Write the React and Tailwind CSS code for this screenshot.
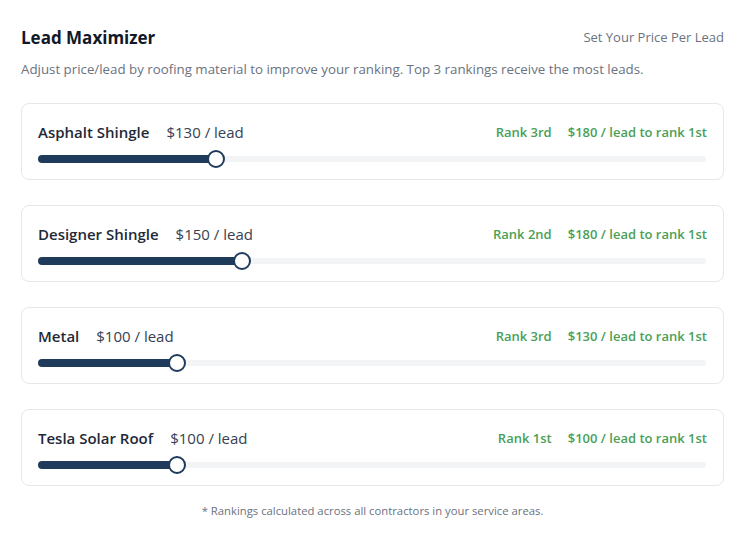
const ROWS = [
  { name: 'Asphalt Shingle', price: 130, rank: '3rd', target: 180 },
  { name: 'Designer Shingle', price: 150, rank: '2nd', target: 180 },
  { name: 'Metal', price: 100, rank: '3rd', target: 130 },
  { name: 'Tesla Solar Roof', price: 100, rank: '1st', target: 100 },
]

const MAX = 500

function Slider({ value }) {
  const frac = value / MAX
  const left = `calc(9px + ${frac} * (100% - 18px))`
  return (
    <div className="relative h-[18px] mt-[7px] mr-[1px]">
      <div className="absolute left-0 right-0 top-[6px] h-[6px] rounded-full bg-[#f3f4f6]" />
      <div className="absolute left-0 top-[5px] h-[8px] rounded-full bg-[#1f3b5c]" style={{ width: left }} />
      <div
        className="absolute top-0 w-[18px] h-[18px] -ml-[9px] rounded-full bg-white border-2 border-[#1f3b5c]"
        style={{ left }}
      />
    </div>
  )
}

export default function App() {
  return (
    <div className="w-[745px] h-[543px] bg-white px-[21px] pt-[26px] text-[#1f2937]" style={{ fontFamily: '"Open Sans", "Noto Sans", sans-serif' }}>
      <div className="flex items-center justify-between">
        <h1 className="text-[17px] font-bold text-[#111827] leading-[24px]">Lead Maximizer</h1>
        <span className="text-[13px] text-[#6b7280]">Set Your Price Per Lead</span>
      </div>
      <p className="mt-[10px] text-[13.3px] text-[#6b7280] leading-[18px]">
        Adjust price/lead by roofing material to improve your ranking. Top 3 rankings receive the most leads.
      </p>

      <div className="mt-[25px] flex flex-col gap-[25px]">
        {ROWS.map(r => (
          <div key={r.name} className="h-[77px] rounded-[8px] border border-[#e5e7eb] px-[16px] pt-[17px]">
            <div className="flex items-center justify-between leading-[22px]">
              <div className="flex items-baseline gap-[17px] text-[15px]">
                <span className="font-semibold text-[#1f2937]">{r.name}</span>
                <span className="text-[#374151]">${r.price} / lead</span>
              </div>
              <div className="flex items-baseline gap-[16px] text-[13px] font-semibold text-[#4a9f57]">
                <span>Rank {r.rank}</span>
                <span>${r.target} / lead to rank 1st</span>
              </div>
            </div>
            <Slider value={r.price} />
          </div>
        ))}
      </div>

      <p className="mt-[17px] text-center text-[11.3px] text-[#6b7280]">
        * Rankings calculated across all contractors in your service areas.
      </p>
    </div>
  )
}
